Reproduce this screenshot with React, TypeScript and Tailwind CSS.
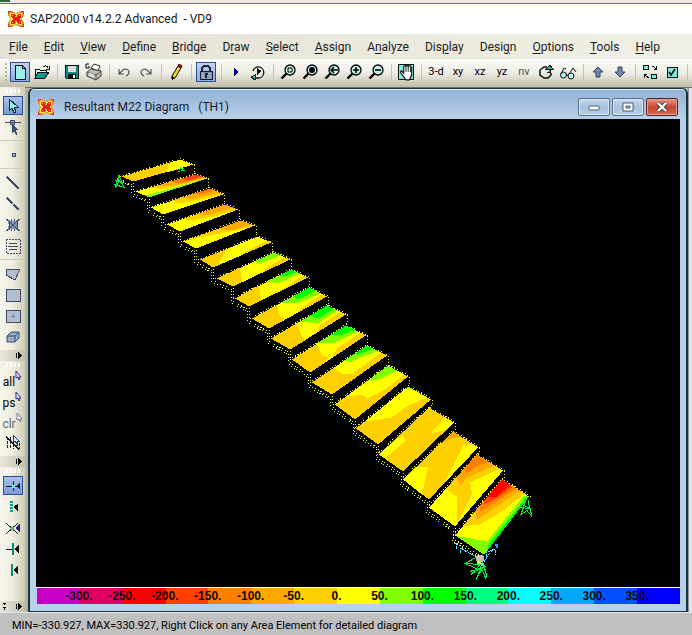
import type { ReactNode } from "react";

const UI = "font-[Roboto,'Noto_Sans',sans-serif]";
const INK = "#0c1418";
const TEAL = "#7fe9dc";

/* ---------- small building blocks ---------- */

function Icon({ children, size = 16 }: { children: ReactNode; size?: number }) {
  return (
    <svg width={size} height={size} viewBox="0 0 16 16" fill="none" shapeRendering="crispEdges" aria-hidden="true">
      {children}
    </svg>
  );
}

function AppLogo() {
  return (
    <Icon>
      <path d="M0 0h4l4 2 4-2h4v4l-2 4 2 4v4h-4l-4-2-4 2H0v-4l2-4-2-4z" fill="#f4912c" />
      <path d="M2 2h3l3 1 3-1h3v3l-1 3 1 3v3h-3l-3-1-3 1H2v-3l1-3-1-3z" fill="#fff04a" />
      <path d="M3 3h3l2 2 2-2h3v3l-2 2 2 2v3h-3l-2-2-2 2H3v-3l2-2-2-2z" fill="#e3201b" />
      <path d="M0 0h3v1H1v2H0zM13 0h3v3h-1V1h-2zM0 13h1v2h2v1H0zM15 13h1v3h-3v-1h2z" fill="#d8382c" />
      <path d="M7 5h2v1H7zM7 10h2v1H7zM4 4h1v1H4zM11 4h1v1h-1zM4 11h1v1H4zM11 11h1v1h-1z" fill="#ffcf30" />
    </Icon>
  );
}

function ToolButton({ label, active, children }: { label: string; active?: boolean; children: ReactNode }) {
  return (
    <button
      type="button"
      aria-label={label}
      aria-pressed={active}
      className={
        active
          ? "flex h-5 w-5 mx-px shrink-0 items-center justify-center border border-[#2c4f9a] bg-gradient-to-b from-[#c4d3ec] to-[#8fabd9]"
          : "flex h-5 w-5 mx-px shrink-0 items-center justify-center"
      }
    >
      {children}
    </button>
  );
}

function SepSlot() {
  return (
    <span className="flex w-2 shrink-0">
      <span className="mx-auto h-4 w-px bg-[#c5c5b4]" />
    </span>
  );
}

/* ---------- toolbar icons ---------- */

function Magnifier({ children }: { children?: ReactNode }) {
  return (
    <svg width="17" height="16" viewBox="0 0 17 16" fill="none" aria-hidden="true">
      <path d="M1.500 14.500L6.500 9.500" stroke="#000" strokeWidth="2.400" />
      <circle cx="10" cy="6" r="5" fill="#c4f2ea" stroke="#000" strokeWidth="1.300" />
      {children}
    </svg>
  );
}

const newIcon = (
  <Icon>
    <path d="M3 1h7l3 3v11H3z" fill="#9cefeb" stroke={INK} />
    <path d="M10 1v3h3" stroke={INK} />
  </Icon>
);
const openIcon = (
  <Icon>
    <path d="M1 13V5h4l1 1h6v2" fill="#d5f7f2" stroke={INK} />
    <path d="M1 14l3-6h11l-4 6z" fill="#149a8c" stroke={INK} />
    <path d="M9 3c2-2 4-1 5 1M15 2v3h-3" stroke={INK} />
  </Icon>
);
const saveIcon = (
  <Icon>
    <path d="M1 1h14v14H2l-1-1z" fill="#148a84" />
    <path d="M1.500 1.500h13v13h-12l-1-1z" stroke={INK} />
    <path d="M4 2h8v6H4z" fill="#dcdcdc" />
    <path d="M4 10h8v5H4z" fill={INK} />
    <path d="M9 11h2v3H9z" fill="#fff" />
  </Icon>
);
const printIcon = (
  <svg width="18" height="18" viewBox="0 0 18 18" fill="none" aria-hidden="true">
    <path d="M6 5l3-4 6 2-2 5z" fill="#fff" stroke="#333" />
    <path d="M2 9l4-3 10 2v5l-5 4-9-4z" fill="#bdbdb8" stroke="#333" />
    <path d="M2 9l9 3 5-4M11 12v5" stroke="#555" />
    <path d="M4 10l5 2M4 12l5 2" stroke="#fff" />
    <path d="M4 1H1v4h3V3" stroke="#000" />
    <path d="M12 13h2" stroke="#d8c020" />
  </svg>
);
const undoIcon = (
  <Icon>
    <path d="M3 5v5h5M3 10l4-4c3-2 6 0 6 2s-1 3-3 4" stroke="#4a5666" strokeWidth="1.200" shapeRendering="auto" />
  </Icon>
);
const redoIcon = (
  <Icon>
    <path d="M13 5v5H8M13 10L9 6C6 4 3 6 3 8s1 3 3 4" stroke="#4a5666" strokeWidth="1.200" shapeRendering="auto" />
  </Icon>
);
const pencilIcon = (
  <Icon>
    <path d="M4 12l6-10 3 2-6 10-3 1z" fill="#f6d61c" stroke="#000" shapeRendering="auto" />
    <path d="M10 2l1-2 3 2-1 2z" fill="#a01818" stroke="#400" shapeRendering="auto" />
    <path d="M4 12l3 2-3 2z" fill="#000" />
  </Icon>
);
const lockIcon = (
  <Icon>
    <path d="M4 8V4l2-2h4l2 2v4" stroke="#1d2b45" strokeWidth="1.500" />
    <path d="M2 7h12v8H2z" fill="#7f93ab" stroke="#14203a" />
    <path d="M3 9h10M3 11h10M3 13h10" stroke="#a9b8cc" />
    <path d="M7 9h3v2H9v3H7z" fill="#14203a" />
  </Icon>
);
const playIcon = (
  <Icon>
    <path d="M6 4l5 4-5 4z" fill="#00008b" />
  </Icon>
);
const loopIcon = (
  <Icon>
    <path d="M3 7a5.500 5.500 0 1 1 5 7M9 14H4" stroke="#111" strokeWidth="1.300" shapeRendering="auto" />
    <path d="M7 4l5 3-5 4z" fill="#111" />
    <path d="M5 11v5l-4-3z" fill="#39b9a6" stroke="#123" />
  </Icon>
);
const handIcon = (
  <Icon size={18}>
    <path d="M1 1h14v14H1z" fill={TEAL} stroke="#111" />
    <path d="M3 8l1-1 2 2V3l1-1 1 1 1-1 1 1 1-1 2 2v7l-2 4H8l-3-4z" fill="#fff" stroke="#111" shapeRendering="auto" />
    <path d="M8 3v5M10 3v5M12 4v4" stroke="#111" strokeWidth="0.800" shapeRendering="auto" />
  </Icon>
);
const rotateIcon = (
  <Icon>
    <path d="M9 3H6L2 6v5l4 3h4l3-3V9" stroke="#111" strokeWidth="1.500" shapeRendering="auto" />
    <path d="M9 8h3V5M8 5l4-4 3 4z" fill="#31b5a5" stroke="#111" />
  </Icon>
);
const glassesIcon = (
  <svg width="18" height="16" viewBox="0 0 18 16" fill="none" aria-hidden="true">
    <circle cx="4.500" cy="11" r="3" fill="#b9f2ea" stroke="#111" />
    <circle cx="12" cy="12" r="3" fill="#b9f2ea" stroke="#111" />
    <path d="M2 10l3-6 2 1M10 10l4-6 3 4M7 11h2" stroke="#111" />
  </svg>
);
const upIcon = (
  <Icon>
    <path d="M8 3l5 5h-3v5H6V8H3z" fill="#7388b4" stroke="#35435f" shapeRendering="auto" />
  </Icon>
);
const downIcon = (
  <Icon>
    <path d="M8 13l5-5h-3V3H6v5H3z" fill="#7388b4" stroke="#35435f" shapeRendering="auto" />
  </Icon>
);
const fitIcon = (
  <Icon size={17}>
    <path d="M1 1h5v4H1zM9 10h5v4H9z" fill={TEAL} stroke="#111" />
    <path d="M10 2l4 3M14 2v3h-3M6 13l-4-3M2 13v-3h3" stroke="#111" />
  </Icon>
);
const checkIcon = (
  <Icon>
    <path d="M3 3h10v10H3z" fill={TEAL} stroke="#111" />
    <path d="M5 8l2 3 4-6" stroke="#111" strokeWidth="1.600" shapeRendering="auto" />
  </Icon>
);

function TextTool({ text, dim }: { text: string; dim?: boolean }) {
  return (
    <ToolButton label={`Set ${text} view`}>
      <span className={dim ? "text-[11px] leading-4 text-[#4d5564]" : "text-[11px] leading-4 text-black"}>{text}</span>
    </ToolButton>
  );
}

function Toolbar() {
  return (
    <div className="flex h-7 shrink-0 items-center overflow-hidden bg-gradient-to-b from-[#fbfbf8] via-[#eeede4] to-[#bfbea9] pb-0.5">
      <span className="ml-1 mr-px h-5 w-1 shrink-0 bg-[radial-gradient(#b9b8a6_1px,transparent_1px)] bg-[size:4px_4px]" />
      <ToolButton label="New model" active>{newIcon}</ToolButton>
      <ToolButton label="Open">{openIcon}</ToolButton>
      <SepSlot />
      <ToolButton label="Save">{saveIcon}</ToolButton>
      <ToolButton label="Print graphics">{printIcon}</ToolButton>
      <SepSlot />
      <ToolButton label="Undo">{undoIcon}</ToolButton>
      <ToolButton label="Redo">{redoIcon}</ToolButton>
      <SepSlot />
      <ToolButton label="Refresh window">{pencilIcon}</ToolButton>
      <SepSlot />
      <ToolButton label="Lock model" active>{lockIcon}</ToolButton>
      <SepSlot />
      <ToolButton label="Run analysis">{playIcon}</ToolButton>
      <ToolButton label="Model alive">{loopIcon}</ToolButton>
      <SepSlot />
      <ToolButton label="Rubber band zoom">
        <Magnifier><path d="M8 4h4v4H8z" stroke="#000" /></Magnifier>
      </ToolButton>
      <ToolButton label="Restore full view">
        <Magnifier><circle cx="10" cy="6" r="3" fill="#000" /></Magnifier>
      </ToolButton>
      <ToolButton label="Previous zoom">
        <Magnifier><path d="M14 6H7M10 3L7 6l3 3" stroke="#000" strokeWidth="1.500" /></Magnifier>
      </ToolButton>
      <ToolButton label="Zoom in">
        <Magnifier><path d="M7 6h6M10 3v6" stroke="#000" strokeWidth="1.600" /></Magnifier>
      </ToolButton>
      <ToolButton label="Zoom out">
        <Magnifier><path d="M7 6h6" stroke="#000" strokeWidth="1.600" /></Magnifier>
      </ToolButton>
      <SepSlot />
      <ToolButton label="Pan">{handIcon}</ToolButton>
      <SepSlot />
      <TextTool text="3-d" />
      <TextTool text="xy" />
      <TextTool text="xz" />
      <TextTool text="yz" />
      <TextTool text="nv" dim />
      <ToolButton label="Rotate 3D view">{rotateIcon}</ToolButton>
      <ToolButton label="Perspective toggle">{glassesIcon}</ToolButton>
      <SepSlot />
      <ToolButton label="Move up in list">{upIcon}</ToolButton>
      <ToolButton label="Move down in list">{downIcon}</ToolButton>
      <SepSlot />
      <ToolButton label="Object shrink toggle">{fitIcon}</ToolButton>
      <ToolButton label="Display options">{checkIcon}</ToolButton>
      <SepSlot />
    </div>
  );
}

/* ---------- menu ---------- */

const menus: [string, string, string][] = [
  ["", "F", "ile"], ["", "E", "dit"], ["", "V", "iew"], ["", "D", "efine"], ["", "B", "ridge"],
  ["D", "r", "aw"], ["", "S", "elect"], ["", "A", "ssign"], ["A", "n", "alyze"], ["Dis", "p", "lay"],
  ["Desi", "g", "n"], ["", "O", "ptions"], ["", "T", "ools"], ["", "H", "elp"],
];

function MenuBar() {
  return (
    <nav className="flex h-[25px] shrink-0 items-center bg-gradient-to-r from-[#e3e1d4] to-[#f1f0e6] pl-px">
      {menus.map(([pre, key, post]) => (
        <button key={pre + key + post} type="button" className="px-2 text-[12px] leading-4 text-[#1c1c1c]">
          {pre}
          <span className="underline underline-offset-2">{key}</span>
          {post}
        </button>
      ))}
    </nav>
  );
}

/* ---------- side bar ---------- */

function SideButton({ label, active, children }: { label: string; active?: boolean; children: ReactNode }) {
  return (
    <button
      type="button"
      aria-label={label}
      className={
        active
          ? "my-px flex h-[19px] w-5 shrink-0 items-center justify-center border border-[#2c4f9a] bg-gradient-to-b from-[#a9c0e8] to-[#7d9cd6]"
          : "flex h-[21px] w-5 shrink-0 items-center justify-center"
      }
    >
      {children}
    </button>
  );
}

function SideSep() {
  return <span className="my-[3px] h-px w-full shrink-0 bg-[#cfcebd]" />;
}

function Grip() {
  return <span className="h-2 w-4 shrink-0 bg-[radial-gradient(#fff_1px,transparent_1px)] bg-[size:4px_8px]" />;
}

function MoreStrip({ both }: { both?: boolean }) {
  return (
    <button
      type="button"
      aria-label="Toolbar options"
      className="mt-[3px] flex h-[11px] w-full shrink-0 items-center justify-end bg-gradient-to-r from-[#e8e7dc] to-[#c2c1ae] pr-0.5"
    >
      <svg width="20" height="9" viewBox="0 0 20 9" fill="#000" shapeRendering="crispEdges" aria-hidden="true">
        {both && <path d="M0 1h3L1.500 3zM0 5h3L1.500 8z" />}
        <path d="M13 2h1v5h-1zM15 1l4 3-4 4z" />
      </svg>
    </button>
  );
}

function SelectWord({ text, dim }: { text: string; dim?: boolean }) {
  return (
    <SideButton label={`Select ${text}`}>
      <span className={dim ? "mt-1 text-[12px] leading-4 text-[#5d6b78]" : "mt-1 text-[12px] leading-4 text-black"}>
        {text}
      </span>
      <svg width="7" height="11" viewBox="0 0 7 11" className="mb-2 shrink-0" aria-hidden="true">
        <path d="M1 1v7l2-1 1 3 1-1-1-2h2z" fill="#e9ecfa" stroke={dim ? "#7b8896" : "#2c2c8c"} />
      </svg>
    </SideButton>
  );
}

const steel = "#3c4c66";

function SideBar() {
  return (
    <aside className="flex w-[25px] shrink-0 flex-col items-center bg-gradient-to-r from-[#f6f5ec] via-[#eeedde] to-[#cfceb9]">
      <Grip />
      <SideButton label="Set select mode" active>
        <Icon>
          <path d="M4 1v12l3-3 2 5 2-1-2-5h4z" fill="#8ff5ee" stroke="#10203c" />
        </Icon>
      </SideButton>
      <SideButton label="Reshape mode">
        <Icon>
          <path d="M0 3h16M5 1h4v4H5z" fill="#97a6b8" stroke={steel} />
          <path d="M7 5v9l2-2 2 4 1-1-1-4h3z" fill={steel} />
        </Icon>
      </SideButton>
      <SideSep />
      <SideButton label="Draw special joint">
        <Icon>
          <path d="M7 6h3v3H7z" fill="#a9b7ca" stroke={steel} />
        </Icon>
      </SideButton>
      <SideSep />
      <SideButton label="Draw frame">
        <Icon><path d="M2 2l12 12" stroke={steel} strokeWidth="2" /></Icon>
      </SideButton>
      <SideButton label="Quick draw frame">
        <Icon>
          <path d="M2 2l12 12" stroke={steel} strokeWidth="2" />
          <path d="M7 7h2v2H7z" fill="#a9b7ca" />
        </Icon>
      </SideButton>
      <SideButton label="Quick draw braces">
        <Icon>
          <path d="M2 2l4 2h4l4-2-2 6 2 6-4-2H6l-4 2 2-6z" fill="#7f91ab" />
          <path d="M1 2l3 2v8l-3 2M15 2l-3 2v8l3 2M3 3l10 10M13 3L3 13M6 2l1 2M10 2L9 4M6 14l1-2M10 14l-1-2" stroke={steel} />
        </Icon>
      </SideButton>
      <SideButton label="Quick draw secondary beams">
        <Icon>
          <path d="M1 1h14v14H1z" stroke={steel} strokeDasharray="2 1" />
          <path d="M4 5h8M3 8h10M4 11h8" stroke={steel} />
        </Icon>
      </SideButton>
      <SideSep />
      <SideButton label="Draw poly area">
        <Icon><path d="M1 3h14l-5 11-9-5z" fill="#b3bfce" stroke={steel} /></Icon>
      </SideButton>
      <SideButton label="Draw rectangular area">
        <Icon><path d="M1 2h14v12H1z" fill="#b3bfce" stroke={steel} /></Icon>
      </SideButton>
      <SideButton label="Quick draw area">
        <Icon>
          <path d="M1 2h14v12H1z" fill="#b3bfce" stroke={steel} />
          <path d="M6 8h4M8 6v4" stroke="#6f88ab" />
        </Icon>
      </SideButton>
      <SideButton label="Draw solid">
        <Icon>
          <path d="M2 7l4-4h8v6l-4 4H2z" fill="#97a9c6" stroke={steel} shapeRendering="auto" />
          <path d="M2 7h8l4-4M10 7v6" stroke={steel} shapeRendering="auto" />
        </Icon>
      </SideButton>
      <MoreStrip />
      <Grip />
      <SelectWord text="all" />
      <SelectWord text="ps" />
      <SelectWord text="clr" dim />
      <SideButton label="Set intersecting line select mode">
        <Icon>
          <path d="M2 2v12M5 2v12M8 5v9M11 6v8M14 8v6" stroke="#222" strokeDasharray="3 1" />
          <path d="M1 2l13 12" stroke="#111" strokeWidth="1.500" />
          <path d="M8 0v7l2-1 2 3v-3h2z" fill="#dfe6fa" stroke="#223a7c" />
        </Icon>
      </SideButton>
      <MoreStrip />
      <Grip />
      <SideButton label="Snap to points" active>
        <Icon>
          <path d="M1 8h14M8 3v10" stroke="#10203c" />
          <path d="M7 7h3v3H7z" fill={TEAL} />
          <path d="M15 4v8l-4-4z" fill="#10203c" />
        </Icon>
      </SideButton>
      <SideButton label="Snap to midpoints">
        <Icon>
          <path d="M6 2v12" stroke="#0c9c8c" strokeWidth="3" strokeDasharray="2 1" />
          <path d="M13 5v7L8 8z" fill="#111" />
        </Icon>
      </SideButton>
      <SideButton label="Snap to intersections">
        <Icon>
          <path d="M1 3l12 11M1 14L13 3" stroke="#222" />
          <path d="M6 7h3v3H6z" fill="#35b9a9" />
          <path d="M15 4v9l-5-5z" fill="#1c1c78" />
        </Icon>
      </SideButton>
      <SideButton label="Snap to perpendicular">
        <Icon>
          <path d="M1 8h6" stroke="#111" />
          <path d="M8 2v12" stroke="#0c8a7c" strokeWidth="2" />
          <path d="M14 4v8l-5-4z" fill="#111" />
        </Icon>
      </SideButton>
      <SideButton label="Snap to lines and edges">
        <Icon>
          <path d="M7 2v12" stroke="#0c8a7c" strokeWidth="2" />
          <path d="M13 4v8L8 8z" fill="#111" />
        </Icon>
      </SideButton>
      <span className="grow" />
      <MoreStrip both />
    </aside>
  );
}

/* ---------- contour model ---------- */

const Y = "#ffff00";
const G = "#ffd000";
const O1 = "#ffa800";
const O2 = "#ff8000";
const O3 = "#ff4000";
const R = "#ff0000";
const L = "#80ff00";
const N = "#00ff00";

type Pt = [number, number];
interface Tread {
  /* corners: left back, right back, right front, left front */
  quad: [Pt, Pt, Pt, Pt];
  base: string;
  bands: [string, string][];
}

const treads: Tread[] = [
  { quad: [[122, 176], [180, 159], [193, 164], [133, 181]], base: G,
    bands: [[Y, "168,165 171,162 180,159 193,164 167,172"]] },
  { quad: [[136, 191], [196, 174], [207, 178], [149, 197]], base: Y,
    bands: [[G, "150,187 196,174 207,178 163,189"], [O1, "158,185 196,174 205,177 170,186"],
      [O2, "170,181 196,174 204,177 180,183"], [O3, "182,178 196,174 202,176 187,180"],
      [L, "145,195 149,197 207,178 203,179"]] },
  { quad: [[151, 207], [210, 188], [223, 194], [163, 214]], base: Y,
    bands: [[G, "172,200 210,188 223,194 205,198 180,203"], [O1, "183,197 210,188 219,192 190,199"],
      [O2, "194,193 210,188 215,190 201,194"]] },
  { quad: [[167, 224], [225, 204], [238, 209], [180, 231]], base: Y,
    bands: [[G, "180,220 225,204 238,209 215,216 195,219"], [O1, "198,213 225,204 233,207 205,215"]] },
  { quad: [[183, 241], [241, 220], [255, 225], [196, 248]], base: Y,
    bands: [[G, "183,241 241,220 255,225 235,230 200,237"], [O1, "220,228 241,220 251,224 232,230"]] },
  { quad: [[200, 259], [258, 236], [271, 242], [213, 267]], base: Y,
    bands: [[G, "200,259 228,248 222,257 219,264 213,267"], [G, "256,246 268,240 271,242 235,257"]] },
  { quad: [[217, 278], [274, 252], [290, 259], [233, 286]], base: Y,
    bands: [[G, "217,278 240,267 242,281 233,286"], [L, "256,260 274,252 281,255 257,264"],
      [G, "285,257 290,259 263,272 268,266"]] },
  { quad: [[235, 298], [291, 269], [308, 277], [249, 306]], base: Y,
    bands: [[G, "235,298 259,285 261,300 249,306"], [L, "267,281 291,269 300,273 278,283"],
      [N, "280,275 291,269 296,272 285,276"], [G, "303,275 308,277 276,293 292,282"]] },
  { quad: [[252, 318], [309, 287], [327, 296], [269, 328]], base: Y,
    bands: [[G, "252,318 277,305 280,315 285,319 269,328"], [L, "282,302 309,287 320,293 300,302"],
      [N, "293,296 309,287 316,290 298,299"], [G, "322,294 327,296 297,312 302,307"]] },
  { quad: [[271, 338], [327, 305], [346, 314], [290, 349]], base: Y,
    bands: [[G, "271,338 297,323 302,336 305,340 290,349"], [L, "300,321 327,305 338,310 317,323"],
      [N, "310,315 327,305 334,309 317,318"], [G, "340,312 346,314 317,332 320,325"]] },
  { quad: [[292, 359], [346, 325], [366, 335], [310, 372]], base: Y,
    bands: [[G, "292,359 317,344 322,355 328,357 326,361 310,372"], [L, "318,342 346,325 358,331 335,342"],
      [N, "331,334 346,325 355,329 340,335"], [G, "361,332 366,335 332,357 338,347"]] },
  { quad: [[312, 382], [367, 345], [387, 355], [332, 394]], base: Y,
    bands: [[G, "312,382 334,367 342,374 353,373 350,381 332,394"], [L, "344,360 367,345 378,351 360,357 350,362"],
      [N, "354,354 367,345 373,348 361,353"], [G, "381,352 387,355 350,381 354,372"]] },
  { quad: [[335, 404], [388, 365], [408, 376], [355, 419]], base: Y,
    bands: [[G, "335,404 347,396 362,394 367,398 387,388 404,374 408,376 355,419"],
      [L, "367,381 388,365 397,370 382,378"]] },
  { quad: [[356, 428], [408, 386], [431, 399], [378, 444]], base: Y,
    bands: [[G, "356,428 365,421 392,417 408,405 427,397 431,399 378,444"], [L, "404,389 408,386 412,388"]] },
  { quad: [[379, 454], [429, 407], [454, 422], [403, 471]], base: G,
    bands: [[Y, "379,454 393,441 403,435 406,440 392,452 385,458"], [Y, "440,423 445,417 454,422 447,429 430,433"]] },
  { quad: [[403, 479], [453, 431], [478, 447], [429, 499]], base: G,
    bands: [[O1, "453,431 440,444 452,438 461,436"], [Y, "403,479 417,466 428,467 422,494"],
      [Y, "463,445 472,443 478,447 445,482 453,465"]] },
  { quad: [[429, 507], [477, 454], [503, 470], [455, 526]], base: Y,
    bands: [[G, "446,488 477,454 500,468 470,482 472,493 457,523 457,497"], [O1, "456,477 477,454 494,465 467,477 460,485"],
      [O2, "464,468 477,454 488,461 475,467 466,473"]] },
  { quad: [[455, 535], [502, 479], [529, 496], [484, 554]], base: Y,
    bands: [[G, "468,519 502,479 525,493 502,511 480,524 463,526"], [O1, "475,511 502,479 520,490 500,504 477,519"],
      [O2, "480,505 502,479 516,488 497,501 480,511"], [O3, "484,500 502,479 513,486 495,499 484,504"],
      [R, "487,496 502,479 510,484 497,496"],
      [L, "455,535 487,541 524,495 529,496 484,554"], [N, "489,543 526,497 529,496 486,552"]] },
];

const str = (pts: Pt[]) => pts.map((p) => p.join(",")).join(" ");

function TreadShape({ tread, next }: { tread: Tread; next?: Tread }) {
  const [a, b, c, d] = tread.quad;
  return (
    <g>
      <polygon points={str(tread.quad)} fill={tread.base} />
      {tread.bands.map(([fill, points]) => (
        <polygon key={fill + points} points={points} fill={fill} />
      ))}
      <g fill="none" stroke="#ffff30" strokeDasharray="1 2">
        <polyline points={str([[a[0] - 2, a[1]], [b[0], b[1] - 1], [c[0] + 2, c[1]]])} />
        <polyline points={str([[a[0] - 2, a[1] + 3], [d[0] - 1, d[1] + 3]])} />
        <polyline points={str([[a[0] - 3, a[1] + 5], [d[0] - 3, d[1] + 4]])} />
        {next && (
          <>
            <polyline points={str([[c[0] + 1, c[1]], [c[0] + 1, next.quad[1][1] - 2], next.quad[1]])} />
            <polyline points={str([[d[0], d[1] + 1], [d[0], next.quad[0][1]]])} />
            <polyline points={str([[d[0] - 2, d[1] + 4], [d[0] - 2, next.quad[0][1] + 3]])} />
          </>
        )}
      </g>
    </g>
  );
}

function ModelView() {
  return (
    <svg
      viewBox="36 119 644 467"
      className="min-h-0 w-full flex-1 bg-black"
      shapeRendering="crispEdges"
      role="img"
      aria-label="Resultant M22 contours on stair treads"
    >
      {treads.map((t, i) => (
        <TreadShape key={i} tread={t} next={treads[i + 1]} />
      ))}
      <g fill="none" stroke="#00f040">
        <path d="M119 175l-4 12M119 175l5 12M115 180l9 2M114 184l11 3M117 178l6 6M121 178l-5 8" />
        <path d="M176 169l8-1M178 171l7-1M180 167l4 4" strokeDasharray="2 1" />
        <path d="M526 499l-5 15 6-4 5 6-4-16M519 507l12 1M522 504l8 4" />
        <path d="M478 556l-13 7 15 1-9 10 10-7-5 12 8-14 3 12-5-16M486 578l-8-17M465 563l18 8M470 571l16-5" />
      </g>
      <g fill="none" stroke="#50e8ff">
        <path d="M454 543h2v5M461 548l18 10M460 552v-4h4M484 561l9-13M488 551l7-2v5M485 542l2 16" strokeDasharray="3 1" />
        <path d="M495 544h2v3" stroke="#3090ff" strokeWidth="2" />
      </g>
      <circle cx="480" cy="558" r="4" fill="#c8c0b8" />
      <path d="M477 560h4v3h-4z" fill="#ffe030" />
      <path d="M481 562h3v3h-3z" fill="#50e8ff" />
    </svg>
  );
}

/* ---------- legend ---------- */

const legendColors = [
  "bg-[#c800c8]", "bg-[#e00064]", "bg-[#ff0000]", "bg-[#ff4000]", "bg-[#ff8000]",
  "bg-[#ffa800]", "bg-[#ffd000]", "bg-[#ffff00]", "bg-[#80ff00]", "bg-[#00ff00]",
  "bg-[#00ff80]", "bg-[#00ffff]", "bg-[#00a8ff]", "bg-[#0050ff]", "bg-[#0000ff]",
];
const legendValues = [-300, -250, -200, -150, -100, -50, 0, 50, 100, 150, 200, 250, 300, 350];

function Legend() {
  return (
    <div className="relative h-[17px] shrink-0 border-t border-white">
      <div className="flex h-full pl-px">
        {legendColors.map((c) => (
          <span key={c} className={`flex-1 ${c}`} />
        ))}
      </div>
      <div className="absolute inset-0 flex items-center font-['Liberation_Sans',Arial,sans-serif] text-[12px] font-bold leading-4 text-[#140808]">
        <span className="flex-1" />
        {legendValues.map((v) => (
          <span key={v} className="flex-[2] text-center">{v}.</span>
        ))}
        <span className="flex-1" />
      </div>
    </div>
  );
}

/* ---------- child window ---------- */

function CaptionButton({ label, close, children }: { label: string; close?: boolean; children: ReactNode }) {
  return (
    <button
      type="button"
      aria-label={label}
      className={
        close
          ? "flex h-[18px] w-8 items-center justify-center rounded-xs border border-[#5b1d1d] bg-gradient-to-b from-[#e39a8c] via-[#c8432c] to-[#cf6a50] shadow-[inset_0_0_0_1px_#e0a294]"
          : "flex h-[18px] w-8 items-center justify-center rounded-xs border border-[#56708f] bg-gradient-to-b from-[#c9dbef] via-[#a5c0de] to-[#b9d0e8] shadow-[inset_0_0_0_1px_#d8e6f5]"
      }
    >
      {children}
    </button>
  );
}

function DiagramWindow() {
  return (
    <section className="flex min-w-0 flex-1 flex-col rounded-t-md border-x-2 border-y border-[#16343c] bg-gradient-to-b from-[#93b1d4] via-[#b9d1ea] via-[30px] to-[#b9d1ea] px-1.5 pb-[7px] shadow-[inset_0_1px_0_0_#e6f0fa]">
      <header className="flex h-[30px] shrink-0 items-center gap-2.5 pl-0.5 pt-1.5">
        <AppLogo />
        <h2 className="grow whitespace-pre text-[12px] leading-4 text-[#141c28]">{"Resultant M22 Diagram   (TH1)"}</h2>
        <div className="flex gap-0.5 pr-0.5">
          <CaptionButton label="Minimize">
            <svg width="12" height="10" viewBox="0 0 12 10" aria-hidden="true">
              <rect x="1" y="4" width="10" height="4" rx="1" fill="#fff" stroke="#4c5a6c" />
            </svg>
          </CaptionButton>
          <CaptionButton label="Maximize">
            <svg width="12" height="10" viewBox="0 0 12 10" aria-hidden="true">
              <path d="M1 1h10v8H1z" fill="#fff" stroke="#4c5a6c" />
              <path d="M4 4h4v2H4z" fill="#a5c0de" stroke="#4c5a6c" />
            </svg>
          </CaptionButton>
          <CaptionButton label="Close" close>
            <svg width="12" height="10" viewBox="0 0 12 10" aria-hidden="true">
              <path d="M2 1l8 8M10 1L2 9" stroke="#4c3038" strokeWidth="4" />
              <path d="M2 1l8 8M10 1L2 9" stroke="#fff" strokeWidth="2.400" />
            </svg>
          </CaptionButton>
        </div>
      </header>
      <ModelView />
      <Legend />
    </section>
  );
}

export default function App() {
  return (
    <div className={`flex h-screen flex-col overflow-hidden bg-[#c0c0c0] ${UI}`}>
      <div className="h-1 shrink-0 border-b border-[#2c7cc0] bg-[#e4eef2]">
        <div className="h-0.5 w-2.5 bg-[#1f6b3c]" />
      </div>
      <header className="flex h-[30px] shrink-0 items-center gap-1.5 bg-white pl-2">
        <AppLogo />
        <h1 className="whitespace-pre text-[12px] leading-4 text-[#161616]">{"SAP2000 v14.2.2 Advanced  - VD9"}</h1>
      </header>
      <MenuBar />
      <Toolbar />
      <main className="flex min-h-0 flex-1">
        <SideBar />
        <div className="flex min-w-0 flex-1 border-t border-[#6e6e66] bg-[#b4b3a4] pl-[3px]">
          <DiagramWindow />
          <div className="w-1 shrink-0 border-l border-[#8e979d] bg-[#dfe5ea]" />
        </div>
      </main>
      <footer className="flex h-[23px] shrink-0 items-center border-t border-[#e6e6e6] bg-[#c0c0c0] pl-3 pt-1">
        <p className="text-[11px] leading-4 text-black">
          MIN=-330.927, MAX=330.927, Right Click on any Area Element for detailed diagram
        </p>
      </footer>
    </div>
  );
}
